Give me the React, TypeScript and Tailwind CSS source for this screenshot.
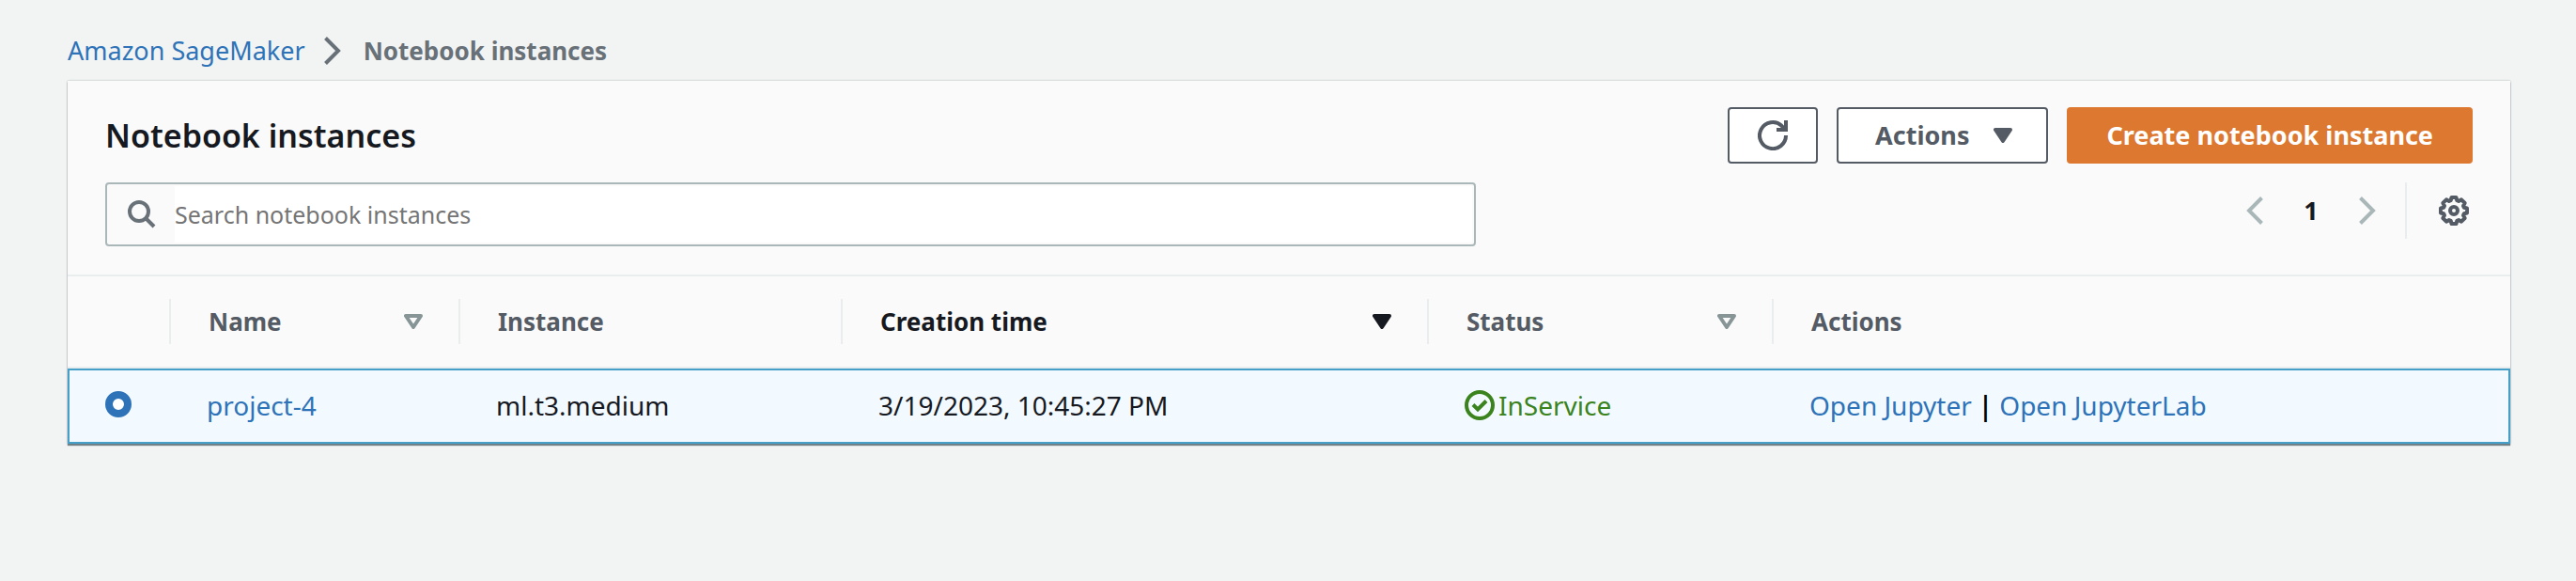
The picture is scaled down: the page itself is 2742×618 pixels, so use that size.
import React from "react";

type SortState = "none" | "sortable" | "active";

interface Column {
  label: string;
  sort: SortState;
  width: string;
}

const columns: Column[] = [
  { label: "Name", sort: "sortable", width: "w-[308px]" },
  { label: "Instance", sort: "none", width: "w-[407px]" },
  { label: "Creation time", sort: "active", width: "w-[624px]" },
  { label: "Status", sort: "sortable", width: "w-[367px]" },
  { label: "Actions", sort: "none", width: "" },
];

function Chevron({ className, flip = false }: { className: string; flip?: boolean }) {
  return (
    <svg viewBox="0 0 18 30" className={className} fill="none" stroke="currentColor" strokeWidth="4" aria-hidden="true">
      <path d={flip ? "M16.5 1.5 3 15l13.500 13.500" : "M1.500 1.500 15 15 1.500 28.500"} />
    </svg>
  );
}

function Caret({ filled = true, className }: { filled?: boolean; className: string }) {
  return (
    <svg
      viewBox="0 0 20 16"
      className={className}
      fill={filled ? "currentColor" : "none"}
      stroke="currentColor"
      strokeWidth="4"
      strokeLinejoin="round"
      aria-hidden="true"
    >
      <path d="M2 2h16l-8 12z" />
    </svg>
  );
}

function RefreshIcon() {
  return (
    <svg viewBox="0 0 32 32" className="size-8" fill="none" stroke="currentColor" strokeWidth="4" aria-hidden="true">
      <path d="M20 10h10V0" />
      <path d="M30 16a14 14 0 1 1-4.500-10.200L29 9.500" />
    </svg>
  );
}

function SearchIcon() {
  return (
    <svg viewBox="0 0 30 30" className="size-[30px] text-[#687078]" fill="none" stroke="currentColor" strokeWidth="4" aria-hidden="true">
      <circle cx="12" cy="12" r="10" />
      <path d="m19 19 9 9" />
    </svg>
  );
}

function GearIcon() {
  return (
    <svg viewBox="0 0 32 32" className="size-8" fill="none" stroke="currentColor" strokeWidth="4" strokeLinejoin="round" aria-hidden="true">
      <path d="M13.500 2h5l.8 3.200 1.800.8 2.900-1.700 3.700 3.700-1.700 2.900.8 1.800 3.200.8v5l-3.200.8-.8 1.800 1.700 2.900-3.700 3.700-2.900-1.700-1.800.8-.8 3.200h-5l-.8-3.200-1.800-.8L8 27.700 4.300 24 6 21.100l-.8-1.800-3.200-.8v-5l3.200-.8.8-1.800L4.300 8 8 4.300 10.900 6l1.800-.8z" />
      <circle cx="16" cy="16" r="4" />
    </svg>
  );
}

function SuccessIcon() {
  return (
    <svg viewBox="0 0 32 32" className="size-8 shrink-0" fill="none" stroke="currentColor" strokeWidth="4" aria-hidden="true">
      <circle cx="16" cy="16" r="14" />
      <path d="m9 15.500 5 5 9-9" />
    </svg>
  );
}

function Toolbar() {
  return (
    <div className="flex items-center justify-between">
      <h1 className="text-[34px] leading-[60px] font-semibold text-[#16191f]">Notebook instances</h1>
      <div className="flex gap-5 text-[27px] font-bold">
        <button
          type="button"
          aria-label="Refresh"
          className="flex h-[60px] w-24 items-center justify-center rounded border-2 border-[#545b64] bg-white text-[#545b64]"
        >
          <RefreshIcon />
        </button>
        <button
          type="button"
          className="flex h-[60px] items-center gap-[26px] rounded border-2 border-[#545b64] bg-white pr-9 pl-[39px] text-[#545b64]"
        >
          Actions
          <Caret className="h-4 w-5" />
        </button>
        <button type="button" className="h-[60px] rounded bg-[#dd7831] px-[42px] text-white">
          Create notebook instance
        </button>
      </div>
    </div>
  );
}

function SearchRow() {
  return (
    <div className="mt-5 flex items-start justify-between">
      <div className="flex h-[68px] w-[57.900%] items-center rounded border-2 border-[#aab7b8] bg-[#fafafa] p-0.5">
        <label htmlFor="search" className="flex w-[70px] shrink-0 pl-5">
          <SearchIcon />
        </label>
        <input
          id="search"
          type="search"
          aria-label="Search notebook instances"
          placeholder="Search notebook instances"
          className="h-full min-w-0 flex-1 bg-white text-[25px] outline-none placeholder:text-[#757575]"
        />
      </div>
      <div className="flex h-[60px] items-center">
        <button type="button" aria-label="Previous page" className="text-[#aab7b8]">
          <Chevron flip className="h-[30px] w-[18px]" />
        </button>
        <button type="button" aria-current="page" className="w-[102px] text-center text-[27px] font-bold text-[#16191f]">
          1
        </button>
        <button type="button" aria-label="Next page" className="text-[#aab7b8]">
          <Chevron className="h-[30px] w-[18px]" />
        </button>
        <div className="ml-[31px] flex h-full items-center border-l-2 border-[#eaeded] pr-1 pl-[34px]">
          <button type="button" aria-label="Preferences" className="text-[#545b64]">
            <GearIcon />
          </button>
        </div>
      </div>
    </div>
  );
}

function HeaderCell({ column }: { column: Column }) {
  const active = column.sort === "active";
  return (
    <th
      scope="col"
      aria-sort={active ? "descending" : undefined}
      className={`border-b-2 border-[#eaeded] py-6 text-left font-bold ${column.width} ${active ? "text-[#16191f]" : "text-[#545b64]"}`}
    >
      <div className="flex h-12 items-center justify-between border-l-2 border-[#eaeded] pr-[38px] pl-10">
        {column.label}
        {column.sort !== "none" && (
          <button type="button" aria-label={`Sort by ${column.label}`} className={active ? "text-[#16191f]" : "text-[#879596]"}>
            <Caret filled={active} className="h-4 w-5" />
          </button>
        )}
      </div>
    </th>
  );
}

const cell = "h-20 border-y-2 border-[#44a0c8] pb-0.5 pl-10";
const link = "text-[#2e73b8] hover:underline";

function InstancesTable() {
  return (
    <table className="w-full table-fixed border-separate border-spacing-0 border-t-2 border-[#eaeded]">
      <thead className="text-[26px]">
        <tr>
          <th scope="col" aria-label="Selection" className="w-[108px] border-b-2 border-[#eaeded]" />
          {columns.map((column) => (
            <HeaderCell key={column.label} column={column} />
          ))}
        </tr>
      </thead>
      <tbody className="bg-[#f3faff] text-[28px] text-[#16191f]">
        <tr>
          <td className="h-20 border-y-2 border-l-2 border-[#44a0c8] pb-1 pl-[38px]">
            <input
              type="radio"
              name="instance"
              aria-label="Select project-4"
              defaultChecked
              className="block size-7 appearance-none rounded-full border-8 border-[#2e73b8] bg-white"
            />
          </td>
          <td className={cell}>
            <a href="#project-4" className={link}>project-4</a>
          </td>
          <td className={cell}>ml.t3.medium</td>
          <td className={cell}>3/19/2023, 10:45:27 PM</td>
          <td className={cell}>
            <span className="flex items-center gap-1 text-[#3a831d]">
              <SuccessIcon />
              InService
            </span>
          </td>
          <td className="h-20 border-y-2 border-r-2 border-[#44a0c8] pb-0.5 pl-10">
            <span className="flex items-center gap-[7px]">
              <a href="#jupyter" className={link}>Open Jupyter</a>
              <span className="font-semibold text-black">|</span>
              <a href="#jupyterlab" className={link}>Open JupyterLab</a>
            </span>
          </td>
        </tr>
      </tbody>
    </table>
  );
}

export default function App() {
  return (
    <div className="min-h-screen bg-[#f2f3f3] pt-8 pr-[70px] pb-10 pl-[72px] font-['Noto_Sans',sans-serif]">
      <nav aria-label="Breadcrumb">
        <ol className="flex h-11 items-center text-[27px]">
          <li>
            <a href="#sagemaker" className={link}>Amazon SageMaker</a>
          </li>
          <li className="mr-6 ml-5 text-[#687078]">
            <Chevron className="h-[30px] w-[18px]" />
          </li>
          <li aria-current="page" className="text-[26px] font-bold text-[#687078]">
            Notebook instances
          </li>
        </ol>
      </nav>
      <main className="mt-2.5 bg-[#fafafa] shadow-[0_2px_1px_0_rgba(0,28,36,0.5),0_0_2px_0_rgba(0,28,36,0.3)]">
        <div className="px-10 pt-7 pb-[30px]">
          <Toolbar />
          <SearchRow />
        </div>
        <InstancesTable />
      </main>
    </div>
  );
}
